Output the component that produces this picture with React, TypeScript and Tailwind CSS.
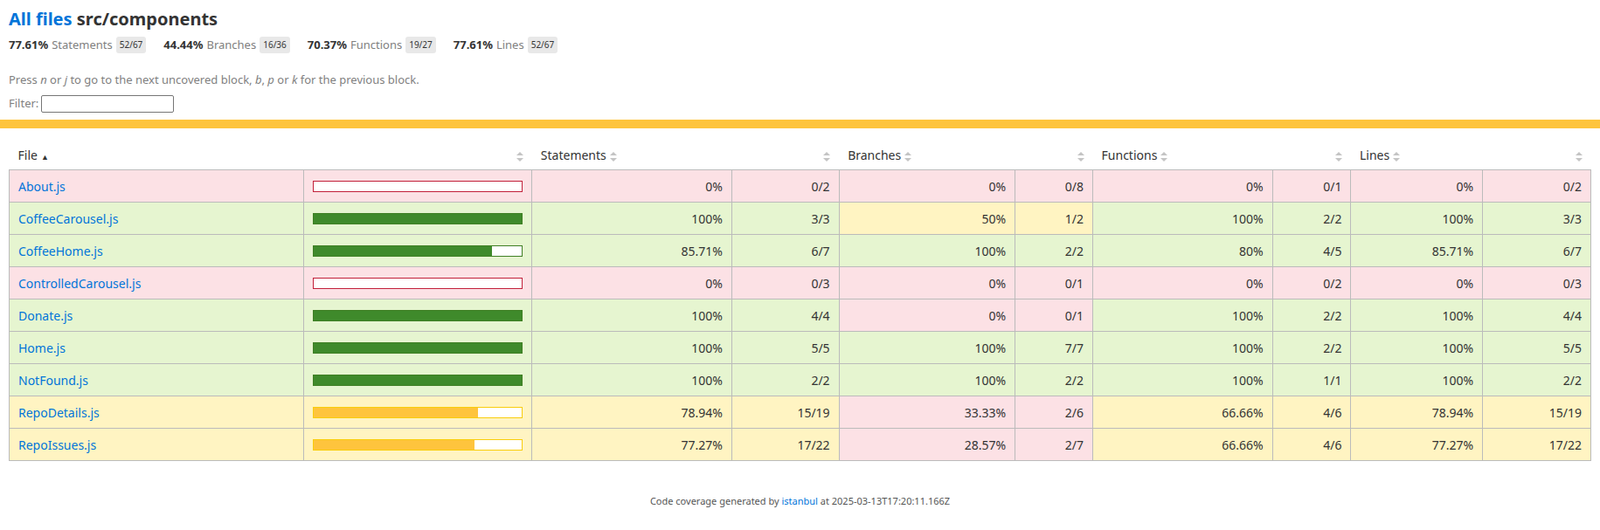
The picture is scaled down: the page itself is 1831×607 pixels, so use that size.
import React from "react";

type Cls = "low" | "medium" | "high";
type Row = {
  file: string;
  pct: number;
  s: [string, string, Cls];
  b: [string, string, Cls];
  f: [string, string, Cls];
  l: [string, string, Cls];
};

const rows: Row[] = [
  { file: "About.js", pct: 0, s: ["0%", "0/2", "low"], b: ["0%", "0/8", "low"], f: ["0%", "0/1", "low"], l: ["0%", "0/2", "low"] },
  { file: "CoffeeCarousel.js", pct: 100, s: ["100%", "3/3", "high"], b: ["50%", "1/2", "medium"], f: ["100%", "2/2", "high"], l: ["100%", "3/3", "high"] },
  { file: "CoffeeHome.js", pct: 85.71, s: ["85.71%", "6/7", "high"], b: ["100%", "2/2", "high"], f: ["80%", "4/5", "high"], l: ["85.71%", "6/7", "high"] },
  { file: "ControlledCarousel.js", pct: 0, s: ["0%", "0/3", "low"], b: ["0%", "0/1", "low"], f: ["0%", "0/2", "low"], l: ["0%", "0/3", "low"] },
  { file: "Donate.js", pct: 100, s: ["100%", "4/4", "high"], b: ["0%", "0/1", "low"], f: ["100%", "2/2", "high"], l: ["100%", "4/4", "high"] },
  { file: "Home.js", pct: 100, s: ["100%", "5/5", "high"], b: ["100%", "7/7", "high"], f: ["100%", "2/2", "high"], l: ["100%", "5/5", "high"] },
  { file: "NotFound.js", pct: 100, s: ["100%", "2/2", "high"], b: ["100%", "2/2", "high"], f: ["100%", "1/1", "high"], l: ["100%", "2/2", "high"] },
  { file: "RepoDetails.js", pct: 78.94, s: ["78.94%", "15/19", "medium"], b: ["33.33%", "2/6", "low"], f: ["66.66%", "4/6", "medium"], l: ["78.94%", "15/19", "medium"] },
  { file: "RepoIssues.js", pct: 77.27, s: ["77.27%", "17/22", "medium"], b: ["28.57%", "2/7", "low"], f: ["66.66%", "4/6", "medium"], l: ["77.27%", "17/22", "medium"] },
];

const bg: Record<Cls, string> = {
  low: "bg-[#fce1e5]",
  medium: "bg-[#fff4c2]",
  high: "bg-[#e6f5d0]",
};

function SortIcon() {
  return (
    <svg width="8" height="11" viewBox="0 0 8 11" className="inline-block align-middle">
      <path d="M4 0 L8 4 L0 4 Z" fill="#c4c4c4" />
      <path d="M4 11 L8 7 L0 7 Z" fill="#c4c4c4" />
    </svg>
  );
}

function Bar({ pct, cls }: { pct: number; cls: Cls }) {
  const border = cls === "low" ? "border-[#c21f39]" : cls === "medium" ? "border-[#f9cd0b]" : "border-[#3f7f24]";
  const fill = cls === "medium" ? "bg-[#fec43d]" : "bg-[#3f8a2b]";
  return (
    <div className={`w-[240px] h-[13px] border bg-white ${border}`}>
      <div className={`h-full ${fill}`} style={{ width: `${pct}%` }} />
    </div>
  );
}

function Head({ label, sorted }: { label?: string; sorted?: boolean }) {
  return (
    <th className="text-left font-normal px-[10px] py-[6px] whitespace-nowrap">
      {label}
      {sorted ? <span className="ml-1 text-[9px] align-middle">▲</span> : label ? <span className="ml-1"><SortIcon /></span> : null}
    </th>
  );
}

export default function App() {
  return (
    <div className="font-['Liberation_Sans'] text-[14px] text-[#333] bg-white min-h-[607px]">
      <div className="p-[10px] pb-[8px]">
        <h1 className="text-[20px] font-bold mb-[8px] leading-[24px]">
          <a className="text-[#0074d9]">All files</a> src/components
        </h1>
        <div className="flex gap-[20px] text-[13px] items-center">
          {[
            ["77.61%", "Statements", "52/67"],
            ["44.44%", "Branches", "16/36"],
            ["70.37%", "Functions", "19/27"],
            ["77.61%", "Lines", "52/67"],
          ].map(([p, n, f]) => (
            <div key={n} className="flex items-center">
              <strong className="font-bold">{p}</strong>
              <span className="text-[#7f7f7f] ml-1">{n}</span>
              <span className="ml-1 bg-[#e8e8e8] rounded-[3px] px-[4px] py-[2px] font-['DejaVu_Sans_Mono'] text-[10px]">{f}</span>
            </div>
          ))}
        </div>
        <p className="text-[#7f7f7f] text-[13px] mt-[20px]">
          Press <em>n</em> or <em>j</em> to go to the next uncovered block, <em>b</em>, <em>p</em> or <em>k</em> for the previous block.
        </p>
        <div className="text-[#7f7f7f] text-[13px] mt-[8px] flex items-center gap-[3px]">
          Filter: <input className="w-[152px] h-[20px] border border-[#767676] rounded-[2px]" />
        </div>
      </div>
      <div className="h-[10px] bg-[#fec43d]" />
      <div className="px-[10px] pt-[14px]">
        <table className="w-full border-collapse">
          <thead>
            <tr>
              <Head label="File" sorted />
              <th className="text-right px-[10px]"><SortIcon /></th>
              <Head label="Statements" />
              <th className="text-right px-[10px]"><SortIcon /></th>
              <Head label="Branches" />
              <th className="text-right px-[10px]"><SortIcon /></th>
              <Head label="Functions" />
              <th className="text-right px-[10px]"><SortIcon /></th>
              <Head label="Lines" />
              <th className="text-right px-[10px]"><SortIcon /></th>
            </tr>
          </thead>
          <tbody>
            {rows.map((r) => (
              <tr key={r.file} className="h-[37px]">
                <td className={`border border-[#bbb] px-[10px] w-[338px] ${bg[r.s[2]]}`}>
                  <a className="text-[#0074d9]">{r.file}</a>
                </td>
                <td className={`border border-[#bbb] px-[10px] w-[259px] ${bg[r.s[2]]}`}>
                  <Bar pct={r.pct} cls={r.s[2]} />
                </td>
                {[r.s, r.b, r.f, r.l].map((c, i) => {
                  const w = [["w-[229px]", "w-[123px]"], ["w-[202px]", "w-[89px]"], ["w-[206px]", "w-[90px]"], ["w-[151px]", "w-[124px]"]][i];
                  return (
                    <React.Fragment key={i}>
                      <td className={`border border-[#bbb] px-[10px] text-right ${w[0]} ${bg[c[2]]}`}>{c[0]}</td>
                      <td className={`border border-[#bbb] px-[10px] text-right ${w[1]} ${bg[c[2]]}`}>{c[1]}</td>
                    </React.Fragment>
                  );
                })}
              </tr>
            ))}
          </tbody>
        </table>
      </div>
      <div className="text-center text-[11px] text-[#555] mt-[38px]">
        Code coverage generated by <a className="text-[#0074d9]">istanbul</a> at 2025-03-13T17:20:11.166Z
      </div>
    </div>
  );
}
